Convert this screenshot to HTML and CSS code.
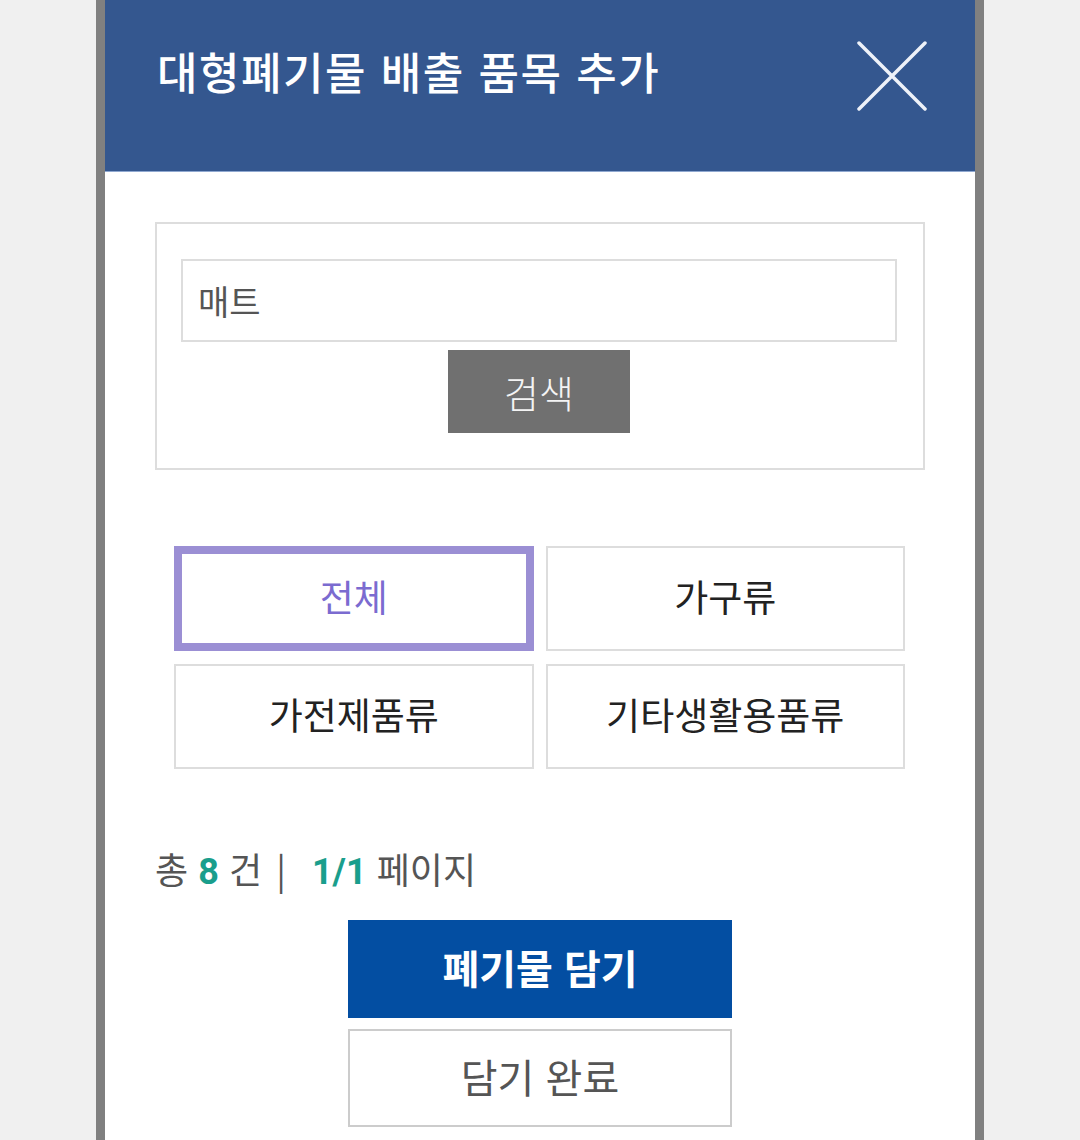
FILE: index.html
```html
<!DOCTYPE html>
<html lang="ko">

<head>
    <meta charset="UTF-8">
    <meta name="viewport" content="width=device-width, initial-scale=1.0">
    <link rel="stylesheet" href="styles.css">
    <title>대형폐기물 배출 품목 추가</title>
</head>

<body>

    <div class="pagina">
        <div class="modal">

            <div class="cabecalho">
                <h1 class="titulo">대형폐기물 배출 품목 추가</h1>
                <button class="fechar" type="button" aria-label="닫기">
                    <svg width="70" height="70" viewBox="0 0 70 70">
                        <path d="M2 2 L68 68 M68 2 L2 68" stroke="#eef2f9" stroke-width="3.5" stroke-linecap="round" fill="none"/>
                    </svg>
                </button>
            </div>

            <div class="conteudo">

                <div class="busca">
                    <input class="campo" type="text" value="매트">
                    <button class="btn-busca" type="button">검색</button>
                </div>

                <div class="categorias">
                    <button class="categoria ativa" type="button">전체</button>
                    <button class="categoria" type="button">가구류</button>
                    <button class="categoria" type="button">가전제품류</button>
                    <button class="categoria" type="button">기타생활용품류</button>
                </div>

                <p class="total">총 <b>8</b> 건 <span class="barra">|</span> <b>1/1</b> 페이지</p>

                <div class="acoes">
                    <button class="btn-principal" type="button">폐기물 담기</button>
                    <button class="btn-secundario" type="button">담기 완료</button>
                </div>

            </div>
        </div>
    </div>

</body>
</html>
```

FILE: styles.css
```css
body {
    margin: 0;
    background: #f0f0f0;
    font-family: "Noto Sans CJK KR", "Noto Sans", sans-serif;
}

.pagina {
    display: flex;
    justify-content: center;
}

.modal {
    width: 870px;
    min-height: 1140px;
    background: #fff;
    border-left: 9px solid #808080;
    border-right: 9px solid #808080;
}

.cabecalho {
    height: 172px;
    box-sizing: border-box;
    padding: 0 48px 30px 52px;
    display: flex;
    align-items: center;
    justify-content: space-between;
    background: #34578f;
    border-bottom: 1px solid #8fa8d0;
}

.titulo {
    margin: 0;
    color: #fff;
    font-size: 44px;
    font-weight: 500;
    letter-spacing: 1.5px;
}

.fechar {
    border: none;
    background: none;
    padding: 0;
    margin-top: 10px;
    display: flex;
}

.conteudo {
    padding: 50px 50px 0 50px;
}

.busca {
    border: 2px solid #ddd;
    padding: 35px 26px 35px 24px;
    display: flex;
    flex-direction: column;
    align-items: center;
    gap: 8px;
}

.campo {
    width: 100%;
    height: 83px;
    box-sizing: border-box;
    border: 2px solid #ddd;
    padding: 0 15px;
    font-family: inherit;
    font-size: 34px;
    color: #555;
    outline: none;
}

.btn-busca {
    width: 182px;
    height: 83px;
    border: none;
    background: #707070;
    color: #f4f4f4;
    font-family: inherit;
    font-size: 38px;
    font-weight: 300;
}

.categorias {
    margin: 76px 20px 0 19px;
    display: grid;
    grid-template-columns: 1fr 1fr;
    grid-auto-rows: 105px;
    gap: 13px 12px;
}

.categoria {
    border: 2px solid #ddd;
    background: #fff;
    color: #222;
    font-family: inherit;
    font-size: 37px;
    font-weight: 400;
    padding-bottom: 6px;
}

.ativa {
    border: 8px solid #9b8fd4;
    color: #7b6bd0;
}

.total {
    margin: 74px 0 0 0;
    font-size: 36px;
    color: #555;
    line-height: 50px;
}

.total b {
    font-family: Roboto, sans-serif;
    color: #1a9e8c;
    font-weight: 700;
}

.barra {
    margin: 0 16px 0 4px;
}

.acoes {
    margin-top: 23px;
    display: flex;
    flex-direction: column;
    align-items: center;
    gap: 11px;
}

.btn-principal,
.btn-secundario {
    width: 384px;
    height: 98px;
    font-family: inherit;
    font-size: 40px;
    padding-bottom: 6px;
}

.btn-principal {
    border: none;
    background: #034ea2;
    color: #fff;
    font-weight: 700;
}

.btn-secundario {
    border: 2px solid #ccc;
    background: #fff;
    color: #555;
    font-weight: 400;
}
```
